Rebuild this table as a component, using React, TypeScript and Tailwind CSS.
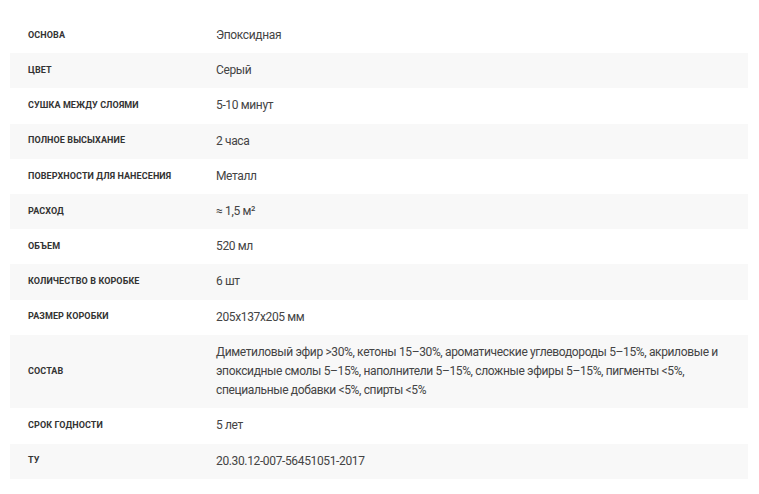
import React from "react";

const rows: [string, string][] = [
  ["Основа", "Эпоксидная"],
  ["Цвет", "Серый"],
  ["Сушка между слоями", "5-10 минут"],
  ["Полное высыхание", "2 часа"],
  ["Поверхности для нанесения", "Металл"],
  ["Расход", "≈ 1,5 м²"],
  ["Объем", "520 мл"],
  ["Количество в коробке", "6 шт"],
  ["Размер коробки", "205x137x205 мм"],
  [
    "Состав",
    "Диметиловый эфир >30%, кетоны 15–30%, ароматические углеводороды 5–15%, акриловые и эпоксидные смолы 5–15%, наполнители 5–15%, сложные эфиры 5–15%, пигменты <5%, специальные добавки <5%, спирты <5%",
  ],
  ["Срок годности", "5 лет"],
  ["ТУ", "20.30.12-007-56451051-2017"],
];

export default function App() {
  return (
    <div className="w-[759px] h-[494px] bg-white pt-[18px] pl-[10px] pr-[11px]" style={{ fontFamily: "Roboto, 'Liberation Sans', sans-serif" }}>
      {rows.map(([k, v], i) => (
        <div
          key={k}
          className={`flex items-center py-[8px] ${i % 2 === 1 ? "bg-[#f8f8f8]" : "bg-white"}`}
        >
          <div className="w-[206px] shrink-0 pl-[18px] text-[9px] font-bold uppercase text-[#333] tracking-[0.1px]">
            {k}
          </div>
          <div className="flex-1 pr-[20px] text-[12px] leading-[19.2px] tracking-[-0.36px] text-[#444]">
            {v}
          </div>
        </div>
      ))}
    </div>
  );
}
